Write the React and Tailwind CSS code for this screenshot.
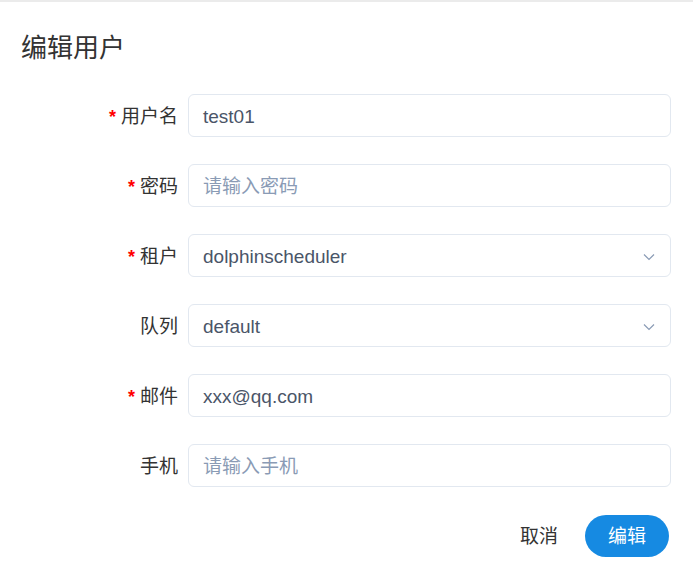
import React from "react";

const font = { fontFamily: '"Liberation Sans", "Noto Sans CJK SC", sans-serif' };

const Chevron = () => (
  <svg width="14" height="14" viewBox="0 0 14 14" fill="none" className="text-[#8a9bb5]">
    <path d="M2 4.5L7 9.5L12 4.5" stroke="currentColor" strokeWidth="1.2" />
  </svg>
);

const Field = ({ label, required, value, placeholder, select }) => (
  <div className="flex items-center h-[43px]">
    <div className="w-[188px] h-[43px] pt-[3px] pr-[10px] flex justify-end items-center text-[19px] text-[#333]">
      {required && <span className="text-[#f00] mr-[5px] text-[18px] font-bold">*</span>}
      {label}
    </div>
    <div className="w-[483px] h-[43px] pt-[3px] border border-[#e2e8f0] rounded-[6px] flex items-center justify-between px-[14px] bg-white">
      {value ? (
        <span className="text-[19px] text-[#4a5568]">{value}</span>
      ) : (
        <span className="text-[19px] text-[#8a9bb5]">{placeholder}</span>
      )}
      {select && <Chevron />}
    </div>
  </div>
);

export default function App() {
  return (
    <div className="w-[693px] h-[584px] bg-white border-t-2 border-[#ebebeb]" style={font}>
      <h2 className="pl-[21px] pt-[29px] text-[26px] leading-[34px] text-[#333]">编辑用户</h2>
      <div className="mt-[29px] flex flex-col gap-[27px]">
        <Field label="用户名" required value="test01" />
        <Field label="密码" required placeholder="请输入密码" />
        <Field label="租户" required value="dolphinscheduler" select />
        <Field label="队列" value="default" select />
        <Field label="邮件" required value="xxx@qq.com" />
        <Field label="手机" placeholder="请输入手机" />
      </div>
      <div className="flex justify-end items-center mt-[28px] pr-[24px] gap-[27px]">
        <button className="text-[19px] text-[#333] pt-[2px]">取消</button>
        <button className="w-[84px] h-[42px] pt-[2px] rounded-full bg-[#168ae2] text-white text-[19px]">编辑</button>
      </div>
    </div>
  );
}
